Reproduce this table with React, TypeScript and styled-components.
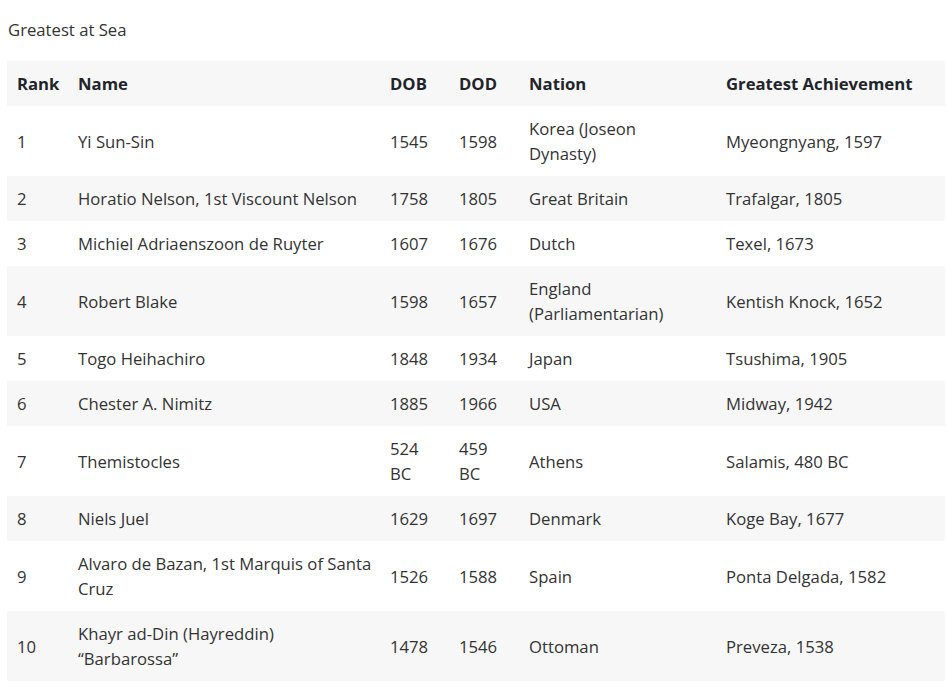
import React from "react";
import styled, { createGlobalStyle } from "styled-components";

const Global = createGlobalStyle`
  html, body { margin: 0; padding: 0; background: #ffffff; }
  body {
    font-family: "Open Sans", "Noto Sans", sans-serif;
    color: #333333;
  }
`;

const Page = styled.main`
  padding: 17px 0 0 7px;
`;

const Title = styled.p`
  margin: 0 0 19px 1px;
  font-size: 16.7px;
  line-height: 25px;
  color: #333333;
`;

const Table = styled.table`
  width: 938px;
  border-collapse: collapse;
  table-layout: fixed;
  font-size: 16.7px;
  line-height: 25px;
`;

const Col = styled.col<{ $w: number }>`
  width: ${(p) => p.$w}px;
`;

const HeadRow = styled.tr`
  background: #f7f7f7;
`;

const Th = styled.th`
  text-align: left;
  font-weight: 700;
  color: #212529;
  padding: 10px;
  vertical-align: middle;
`;

const Row = styled.tr<{ $striped: boolean }>`
  background: ${(p) => (p.$striped ? "#f7f7f7" : "#ffffff")};
`;

const Td = styled.td<{ $wide?: boolean }>`
  padding: 10px ${(p) => (p.$wide ? 6 : 10)}px 10px 10px;
  vertical-align: middle;
  color: #333333;
`;

type Entry = [string, string, string, string, string, string];

const rows: Entry[] = [
  ["1", "Yi Sun-Sin", "1545", "1598", "Korea (Joseon Dynasty)", "Myeongnyang, 1597"],
  ["2", "Horatio Nelson, 1st Viscount Nelson", "1758", "1805", "Great Britain", "Trafalgar, 1805"],
  ["3", "Michiel Adriaenszoon de Ruyter", "1607", "1676", "Dutch", "Texel, 1673"],
  ["4", "Robert Blake", "1598", "1657", "England (Parliamentarian)", "Kentish Knock, 1652"],
  ["5", "Togo Heihachiro", "1848", "1934", "Japan", "Tsushima, 1905"],
  ["6", "Chester A. Nimitz", "1885", "1966", "USA", "Midway, 1942"],
  ["7", "Themistocles", "524 BC", "459 BC", "Athens", "Salamis, 480 BC"],
  ["8", "Niels Juel", "1629", "1697", "Denmark", "Koge Bay, 1677"],
  ["9", "Alvaro de Bazan, 1st Marquis of Santa Cruz", "1526", "1588", "Spain", "Ponta Delgada, 1582"],
  ["10", "Khayr ad-Din (Hayreddin) \u201cBarbarossa\u201d", "1478", "1546", "Ottoman", "Preveza, 1538"],
];

const widths = [61, 312, 69, 70, 197, 229];
const headers = ["Rank", "Name", "DOB", "DOD", "Nation", "Greatest Achievement"];

export default function App() {
  return (
    <>
      <Global />
      <Page>
        <Title>Greatest at Sea</Title>
        <Table>
          <colgroup>
            {widths.map((w, i) => (
              <Col key={i} $w={w} />
            ))}
          </colgroup>
          <thead>
            <HeadRow>
              {headers.map((h) => (
                <Th key={h}>{h}</Th>
              ))}
            </HeadRow>
          </thead>
          <tbody>
            {rows.map((r, i) => (
              <Row key={r[0]} $striped={i % 2 === 1}>
                {r.map((c, j) => (
                  <Td key={j} $wide={j === 1}>
                    {c}
                  </Td>
                ))}
              </Row>
            ))}
          </tbody>
        </Table>
      </Page>
    </>
  );
}
